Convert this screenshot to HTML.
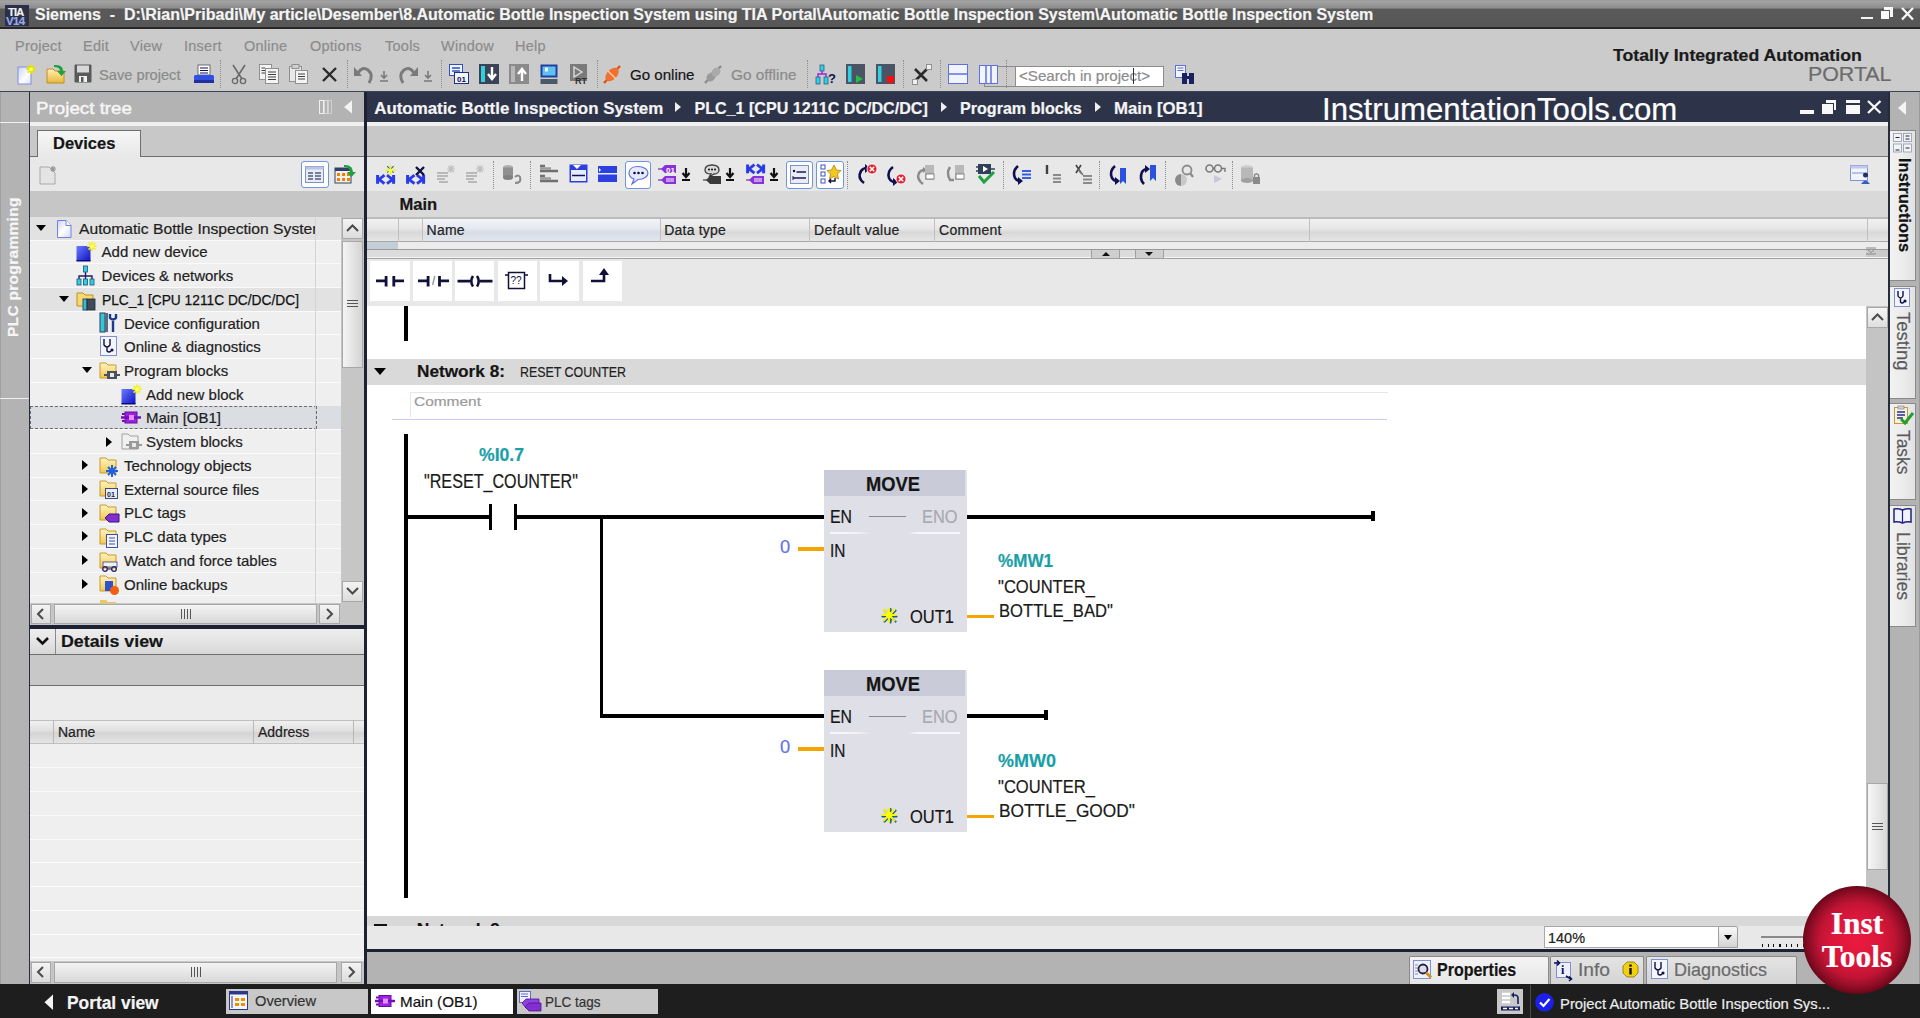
<!DOCTYPE html>
<html><head><meta charset="utf-8">
<style>
*{margin:0;padding:0;box-sizing:border-box}
html,body{width:1920px;height:1018px;overflow:hidden;background:#cbcbcb;font-family:"Liberation Sans",sans-serif;position:relative}
.a{position:absolute}
.t{position:absolute;white-space:pre;line-height:1;-webkit-text-stroke:0.2px currentColor}
svg{position:absolute;overflow:visible}
</style></head><body>
<div class="a" style="left:0px;top:0px;width:1920px;height:27px;background:linear-gradient(#9a9a9a 0,#a2a2a2 1.5px,#8c8c8c 8px,#5a5a5a 9.2px,#575757 26px,#5e5e5e 27px);"></div>
<div class="a" style="left:0px;top:27px;width:1920px;height:2px;background:#262626;"></div>
<div class="a" style="left:0px;top:29px;width:1920px;height:62px;background:#cbcbcb;"></div>
<div class="a" style="left:0px;top:91px;width:1920px;height:1px;background:#3c4258;"></div>
<div class="a" style="left:0px;top:92px;width:29px;height:892px;background:#b3b3b3;"></div>
<div class="a" style="left:0px;top:92px;width:1px;height:892px;background:#a0a0a0;"></div>
<div class="a" style="left:29px;top:92px;width:1px;height:892px;background:#262b3d;"></div>
<div class="a" style="left:30px;top:92px;width:334px;height:30px;background:#b3b3b3;"></div>
<div class="a" style="left:30px;top:122px;width:334px;height:4px;background:#f0f0f0;"></div>
<div class="a" style="left:30px;top:126px;width:334px;height:30px;background:#c8c8c8;"></div>
<div class="a" style="left:30px;top:156px;width:334px;height:1px;background:#7a7a7a;"></div>
<div class="a" style="left:30px;top:157px;width:334px;height:34px;background:#e8e8e8;"></div>
<div class="a" style="left:30px;top:191px;width:334px;height:26px;background:#c6c6c6;"></div>
<div class="a" style="left:30px;top:217px;width:311px;height:386px;background:#efefef;"></div>
<div class="a" style="left:341px;top:217px;width:23px;height:386px;background:#c6c6c6;"></div>
<div class="a" style="left:364px;top:92px;width:3px;height:892px;background:#1c2133;"></div>
<div class="a" style="left:367px;top:92px;width:1521px;height:30px;background:#2d3349;"></div>
<div class="a" style="left:367px;top:122px;width:1521px;height:4px;background:#f0f0f0;"></div>
<div class="a" style="left:367px;top:126px;width:1521px;height:30px;background:#c8c8c8;"></div>
<div class="a" style="left:367px;top:156px;width:1521px;height:1px;background:#7a7a7a;"></div>
<div class="a" style="left:367px;top:157px;width:1521px;height:34px;background:#e8e8e8;"></div>
<div class="a" style="left:367px;top:191px;width:1521px;height:27px;background:#d9d9d9;"></div>
<div class="a" style="left:367px;top:258px;width:1521px;height:48px;background:#e8e8e8;"></div>
<div class="a" style="left:367px;top:306px;width:1499px;height:610px;background:#ffffff;"></div>
<div class="a" style="left:1866px;top:306px;width:22px;height:610px;background:#c4c4c4;"></div>
<div class="a" style="left:367px;top:916px;width:1499px;height:10px;background:#d8d8d8;"></div>
<div class="a" style="left:367px;top:926px;width:1521px;height:23px;background:#e8e8e8;"></div>
<div class="a" style="left:1888px;top:92px;width:2px;height:892px;background:#262b3d;"></div>
<div class="a" style="left:1890px;top:92px;width:30px;height:892px;background:#b3b3b3;"></div>
<div class="a" style="left:1919px;top:92px;width:1px;height:892px;background:#9a9a9a;"></div>
<div class="a" style="left:367px;top:949px;width:1523px;height:3px;background:#1c2133;"></div>
<div class="a" style="left:367px;top:952px;width:1523px;height:32px;background:#b3b3b3;"></div>
<div class="a" style="left:0px;top:984px;width:1920px;height:34px;background:#1e1e1e;"></div>
<div class="t" style="left:35.5px;top:100.00px;font-size:17px;color:#f6f6f6;transform:scaleX(1.104356672694134);transform-origin:0 0;-webkit-text-stroke:0.45px #f6f6f6;">Project tree</div>
<svg style="left:318px;top:99px" width="40" height="16"><rect x="1.5" y="1.5" width="4" height="13" fill="none" stroke="#f0f0f0"/><rect x="6.5" y="1.5" width="3" height="13" fill="none" stroke="#d8d8d8"/><rect x="10.5" y="1.5" width="3" height="13" fill="none" stroke="#d0d0d0"/><path d="M26 8 L34 1.5 L34 14.5 Z" fill="#f4f4f4"/></svg>
<div class="a" style="left:37px;top:130px;width:104px;height:27px;background:linear-gradient(#f6f6f6,#e8e8e8);border:1px solid #6e6e6e;border-bottom:none"></div>
<div class="a" style="left:30px;top:156px;width:8px;height:1px;background:#6e6e6e;"></div>
<div class="a" style="left:141px;top:156px;width:223px;height:1px;background:#6e6e6e;"></div>
<div class="t" style="left:53px;top:135.00px;font-size:16.5px;color:#151515;font-weight:bold;">Devices</div>
<svg style="left:39px;top:165px" width="22" height="22"><path d="M1 2 H10 L16 8 V19 H1 Z" fill="#e4e4e4" stroke="#a8a8a8"/><path d="M14 1 V7 M11 4 H17 M12 2 L16 6 M16 2 L12 6" stroke="#9a9a9a" stroke-width="1.2"/></svg>
<div class="a" style="left:301px;top:161px;width:28px;height:27px;background:#ffffff;border:1.5px solid #6f94e0;border-radius:3px"></div>
<svg style="left:305px;top:166px" width="20" height="18"><rect x="0.5" y="0.5" width="18" height="16" fill="#e8ecf6" stroke="#8090c0"/><rect x="0.5" y="0.5" width="18" height="3" fill="#b8c4e8"/><path d="M3 7 H8 M10 7 H16 M3 10 H8 M10 10 H16 M3 13 H8 M10 13 H16" stroke="#505a80" stroke-width="1.3"/></svg>
<svg style="left:334px;top:163px" width="24" height="22"><rect x="1" y="5" width="16" height="15" fill="#f0f0f0" stroke="#30406a"/><rect x="1" y="5" width="16" height="3" fill="#30406a"/><g fill="#f08000"><rect x="3" y="10" width="3" height="3"/><rect x="8" y="10" width="3" height="3"/><rect x="13" y="10" width="3" height="3"/><rect x="3" y="15" width="3" height="3"/><rect x="8" y="15" width="3" height="3"/><rect x="13" y="15" width="3" height="3"/></g><path d="M10 2 Q18 1 19 9 L22 9 L17.5 14 L13 9 L16 9 Q15.5 4 10 4 Z" fill="#20a040"/></svg>
<div class="a" style="left:30px;top:216.5px;width:311px;height:23px;background:#e2e2e2;"></div>
<div class="a" style="left:30px;top:239.5px;width:311px;height:1px;background:#fafafa;"></div>
<div class="a" style="left:36px;top:225.0px;width:0;height:0;border-left:5px solid transparent;border-right:5px solid transparent;border-top:6px solid #000"></div>
<svg style="left:56px;top:218.5px" width="18" height="20"><defs><linearGradient id="gd" x1="0" y1="0" x2="1" y2="1"><stop offset="0" stop-color="#c8d0f8"/><stop offset="0.5" stop-color="#ffffff"/><stop offset="1" stop-color="#d0d8ff"/></linearGradient></defs><path d="M1.5 1.5 H10 L15 6.5 V18.5 H1.5 Z" fill="url(#gd)" stroke="#7080e0"/><path d="M10 1.5 V6.5 H15" fill="#fff" stroke="#7080e0"/></svg>
<div class="a" style="left:79px;top:216.5px;width:237px;height:23px;overflow:hidden"><div class="t" style="left:0;top:4.45px;font-size:15px;color:#1e1e1e;transform:scaleX(1.0440);transform-origin:0 0">Automatic Bottle Inspection Systen</div></div>
<div class="a" style="left:30px;top:263.22px;width:311px;height:1px;background:#fafafa;"></div>
<svg style="left:76px;top:241.22px" width="22" height="22"><defs><linearGradient id="ga" x1="0" y1="0" x2="1" y2="1"><stop offset="0" stop-color="#6a7cff"/><stop offset="1" stop-color="#1010c0"/></linearGradient></defs><rect x="0.5" y="5" width="14" height="15" fill="url(#ga)"/><rect x="0.5" y="19" width="14" height="1.5" fill="#0a0a80"/><g stroke="#f0f020" stroke-width="1.6"><path d="M16 0.5 V10 M11.2 5.2 H20.8 M12.6 1.8 L19.4 8.6 M19.4 1.8 L12.6 8.6"/></g><circle cx="16" cy="5.2" r="2" fill="#ffff60"/></svg>
<div class="t" style="left:101.6px;top:244.00px;font-size:15px;color:#1e1e1e;">Add new device</div>
<div class="a" style="left:30px;top:286.94px;width:311px;height:1px;background:#fafafa;"></div>
<svg style="left:76px;top:264.94px" width="20" height="22"><path d="M9.5 6 V11 M3 14 V11 H16 V14 M9.5 11 V14" stroke="#202060" stroke-width="1.4" fill="none"/><rect x="7.5" y="1" width="4" height="6" fill="#30d0e0" stroke="#205080" stroke-width="0.8"/><rect x="1" y="14" width="4" height="6" fill="#30d0e0" stroke="#205080" stroke-width="0.8"/><rect x="7.5" y="14" width="4" height="6" fill="#30d0e0" stroke="#205080" stroke-width="0.8"/><rect x="14" y="14" width="4" height="6" fill="#30d0e0" stroke="#205080" stroke-width="0.8"/></svg>
<div class="t" style="left:101.6px;top:268.00px;font-size:15px;color:#1e1e1e;">Devices &amp; networks</div>
<div class="a" style="left:30px;top:287.65999999999997px;width:311px;height:23px;background:#e2e2e2;"></div>
<div class="a" style="left:30px;top:310.65999999999997px;width:311px;height:1px;background:#fafafa;"></div>
<div class="a" style="left:59px;top:296.2px;width:0;height:0;border-left:5px solid transparent;border-right:5px solid transparent;border-top:6px solid #000"></div>
<svg style="left:76px;top:288.65999999999997px" width="22" height="22"><path d="M1 4 H7 L9 6 H17 V17 H1 Z" fill="#f8d870" stroke="#c09020"/><rect x="7" y="10" width="4" height="11" fill="#30c0d0" stroke="#203050" stroke-width="0.8"/><rect x="11" y="10" width="8" height="11" fill="#404a5a" stroke="#202830" stroke-width="0.8"/></svg>
<div class="t" style="left:101.6px;top:292.00px;font-size:15px;color:#111;transform:scaleX(0.917157234488691);transform-origin:0 0;-webkit-text-stroke:0.25px #111;">PLC_1 [CPU 1211C DC/DC/DC]</div>
<div class="a" style="left:30px;top:334.38px;width:311px;height:1px;background:#fafafa;"></div>
<svg style="left:99px;top:312.38px" width="22" height="22"><rect x="1" y="1" width="5" height="19" fill="#30c8d8" stroke="#304060"/><rect x="6" y="1" width="3" height="19" fill="#606a7a"/><path d="M14 20 V9 M11 2 V6 Q14 9 17 6 V2" stroke="#1a3a90" stroke-width="2.4" fill="none"/></svg>
<div class="t" style="left:124px;top:316.00px;font-size:15px;color:#1e1e1e;">Device configuration</div>
<div class="a" style="left:30px;top:358.1px;width:311px;height:1px;background:#fafafa;"></div>
<svg style="left:100px;top:336.1px" width="18" height="22"><rect x="0.5" y="0.5" width="16" height="19" fill="#f4f6ff" stroke="#8090d0"/><path d="M4 3 V9 Q7 13 10 9 V3 M7 11 V15 Q9 17 11 15" stroke="#101040" stroke-width="1.4" fill="none"/><circle cx="12" cy="14" r="1.6" fill="#101040"/></svg>
<div class="t" style="left:124px;top:339.00px;font-size:15px;color:#1e1e1e;">Online &amp; diagnostics</div>
<div class="a" style="left:30px;top:381.82px;width:311px;height:1px;background:#fafafa;"></div>
<div class="a" style="left:82px;top:367.3px;width:0;height:0;border-left:5px solid transparent;border-right:5px solid transparent;border-top:6px solid #000"></div>
<svg style="left:99px;top:359.82px" width="22" height="22"><defs><linearGradient id="gf" x1="0" y1="0" x2="0" y2="1"><stop offset="0" stop-color="#fff4c0"/><stop offset="1" stop-color="#f0c850"/></linearGradient></defs><path d="M1 3 H7 L9 5 H17 V18 H1 Z" fill="url(#gf)" stroke="#c89828"/></svg>
<svg style="left:104px;top:369.82px" width="16" height="10"><rect x="3" y="1" width="10" height="8" fill="#4a5060"/><path d="M0 5 H16" stroke="#4a5060" stroke-width="2"/><rect x="6" y="3" width="4" height="4" fill="#e8e8e8"/></svg>
<div class="t" style="left:124px;top:363.00px;font-size:15px;color:#1e1e1e;">Program blocks</div>
<div class="a" style="left:30px;top:405.53999999999996px;width:311px;height:1px;background:#fafafa;"></div>
<svg style="left:121px;top:383.53999999999996px" width="22" height="22"><defs><linearGradient id="ga" x1="0" y1="0" x2="1" y2="1"><stop offset="0" stop-color="#6a7cff"/><stop offset="1" stop-color="#1010c0"/></linearGradient></defs><rect x="0.5" y="5" width="14" height="15" fill="url(#ga)"/><rect x="0.5" y="19" width="14" height="1.5" fill="#0a0a80"/><g stroke="#f0f020" stroke-width="1.6"><path d="M16 0.5 V10 M11.2 5.2 H20.8 M12.6 1.8 L19.4 8.6 M19.4 1.8 L12.6 8.6"/></g><circle cx="16" cy="5.2" r="2" fill="#ffff60"/></svg>
<div class="t" style="left:146px;top:387.00px;font-size:15px;color:#1e1e1e;">Add new block</div>
<div class="a" style="left:30px;top:406.26px;width:311px;height:23px;background:#dadde2;"></div>
<div class="a" style="left:30px;top:406.3px;width:287px;height:23px;border:1px dashed #6a6a6a"></div>
<div class="a" style="left:30px;top:429.26px;width:311px;height:1px;background:#fafafa;"></div>
<svg style="left:121px;top:410.26px" width="22" height="16"><rect x="4" y="2" width="12" height="11" fill="#a020e0" stroke="#6010a0"/><path d="M0 7.5 H20" stroke="#7010b0" stroke-width="2.5"/><path d="M1 4 H4 M1 11 H4" stroke="#7010b0" stroke-width="2"/><rect x="8" y="5" width="5" height="5" fill="#e090ff"/></svg>
<div class="t" style="left:146px;top:410.00px;font-size:15px;color:#1e1e1e;">Main [OB1]</div>
<div class="a" style="left:30px;top:452.98px;width:311px;height:1px;background:#fafafa;"></div>
<div class="a" style="left:106px;top:436.5px;width:0;height:0;border-top:5px solid transparent;border-bottom:5px solid transparent;border-left:6px solid #000"></div>
<svg style="left:121px;top:430.98px" width="22" height="22"><path d="M1 3 H7 L9 5 H17 V18 H1 Z" fill="#f0f0f0" stroke="#a0a0a0"/><rect x="8" y="10" width="10" height="8" fill="#9a9a9a"/><path d="M5 14 H21" stroke="#9a9a9a" stroke-width="2"/><rect x="11" y="12" width="4" height="4" fill="#e8e8e8"/></svg>
<div class="t" style="left:146px;top:434.00px;font-size:15px;color:#1e1e1e;">System blocks</div>
<div class="a" style="left:30px;top:476.7px;width:311px;height:1px;background:#fafafa;"></div>
<div class="a" style="left:82px;top:460.2px;width:0;height:0;border-top:5px solid transparent;border-bottom:5px solid transparent;border-left:6px solid #000"></div>
<svg style="left:99px;top:454.7px" width="22" height="22"><defs><linearGradient id="gf" x1="0" y1="0" x2="0" y2="1"><stop offset="0" stop-color="#fff4c0"/><stop offset="1" stop-color="#f0c850"/></linearGradient></defs><path d="M1 3 H7 L9 5 H17 V18 H1 Z" fill="url(#gf)" stroke="#c89828"/></svg>
<svg style="left:106px;top:464.7px" width="12" height="12"><path d="M6 0 V12 M0 6 H12 M2 2 L10 10 M10 2 L2 10" stroke="#2060e0" stroke-width="2"/></svg>
<div class="t" style="left:124px;top:458.00px;font-size:15px;color:#1e1e1e;">Technology objects</div>
<div class="a" style="left:30px;top:500.41999999999996px;width:311px;height:1px;background:#fafafa;"></div>
<div class="a" style="left:82px;top:483.9px;width:0;height:0;border-top:5px solid transparent;border-bottom:5px solid transparent;border-left:6px solid #000"></div>
<svg style="left:99px;top:478.41999999999996px" width="22" height="22"><defs><linearGradient id="gf" x1="0" y1="0" x2="0" y2="1"><stop offset="0" stop-color="#fff4c0"/><stop offset="1" stop-color="#f0c850"/></linearGradient></defs><path d="M1 3 H7 L9 5 H17 V18 H1 Z" fill="url(#gf)" stroke="#c89828"/></svg>
<svg style="left:105px;top:488.41999999999996px" width="13" height="11"><rect x="0.5" y="0.5" width="12" height="10" fill="#e8ecf8" stroke="#404a80"/><text x="2" y="9" font-size="7" font-family="Liberation Sans" font-weight="bold" fill="#202040">01</text></svg>
<div class="t" style="left:124px;top:482.00px;font-size:15px;color:#1e1e1e;">External source files</div>
<div class="a" style="left:30px;top:524.14px;width:311px;height:1px;background:#fafafa;"></div>
<div class="a" style="left:82px;top:507.6px;width:0;height:0;border-top:5px solid transparent;border-bottom:5px solid transparent;border-left:6px solid #000"></div>
<svg style="left:99px;top:502.14px" width="22" height="22"><defs><linearGradient id="gf" x1="0" y1="0" x2="0" y2="1"><stop offset="0" stop-color="#fff4c0"/><stop offset="1" stop-color="#f0c850"/></linearGradient></defs><path d="M1 3 H7 L9 5 H17 V18 H1 Z" fill="url(#gf)" stroke="#c89828"/></svg>
<svg style="left:105px;top:513.14px" width="15" height="10"><path d="M0 5 L4 1 H14 V9 H4 Z" fill="#8030d0" stroke="#401080"/></svg>
<div class="t" style="left:124px;top:505.00px;font-size:15px;color:#1e1e1e;">PLC tags</div>
<div class="a" style="left:30px;top:547.86px;width:311px;height:1px;background:#fafafa;"></div>
<div class="a" style="left:82px;top:531.4px;width:0;height:0;border-top:5px solid transparent;border-bottom:5px solid transparent;border-left:6px solid #000"></div>
<svg style="left:99px;top:525.86px" width="22" height="22"><defs><linearGradient id="gf" x1="0" y1="0" x2="0" y2="1"><stop offset="0" stop-color="#fff4c0"/><stop offset="1" stop-color="#f0c850"/></linearGradient></defs><path d="M1 3 H7 L9 5 H17 V18 H1 Z" fill="url(#gf)" stroke="#c89828"/></svg>
<svg style="left:106px;top:533.86px" width="12" height="14"><rect x="0.5" y="0.5" width="11" height="13" fill="#f0f4ff" stroke="#4050a0"/><path d="M3 4 H9 M3 7 H9 M3 10 H9" stroke="#4050a0"/></svg>
<div class="t" style="left:124px;top:529.00px;font-size:15px;color:#1e1e1e;">PLC data types</div>
<div class="a" style="left:30px;top:571.5799999999999px;width:311px;height:1px;background:#fafafa;"></div>
<div class="a" style="left:82px;top:555.1px;width:0;height:0;border-top:5px solid transparent;border-bottom:5px solid transparent;border-left:6px solid #000"></div>
<svg style="left:99px;top:549.5799999999999px" width="22" height="22"><defs><linearGradient id="gf" x1="0" y1="0" x2="0" y2="1"><stop offset="0" stop-color="#fff4c0"/><stop offset="1" stop-color="#f0c850"/></linearGradient></defs><path d="M1 3 H7 L9 5 H17 V18 H1 Z" fill="url(#gf)" stroke="#c89828"/></svg>
<svg style="left:100px;top:561.5799999999999px" width="20" height="10"><rect x="3" y="0" width="14" height="5" fill="#f0f0f8" stroke="#404080" stroke-width="0.8"/><circle cx="5" cy="7" r="2.3" fill="none" stroke="#202060" stroke-width="1.3"/><circle cx="14" cy="7" r="2.3" fill="none" stroke="#202060" stroke-width="1.3"/><path d="M7.3 7 H11.7" stroke="#202060"/></svg>
<div class="t" style="left:124px;top:553.00px;font-size:15px;color:#1e1e1e;">Watch and force tables</div>
<div class="a" style="left:30px;top:595.3px;width:311px;height:1px;background:#fafafa;"></div>
<div class="a" style="left:82px;top:578.8px;width:0;height:0;border-top:5px solid transparent;border-bottom:5px solid transparent;border-left:6px solid #000"></div>
<svg style="left:99px;top:573.3px" width="22" height="22"><defs><linearGradient id="gf" x1="0" y1="0" x2="0" y2="1"><stop offset="0" stop-color="#fff4c0"/><stop offset="1" stop-color="#f0c850"/></linearGradient></defs><path d="M1 3 H7 L9 5 H17 V18 H1 Z" fill="url(#gf)" stroke="#c89828"/></svg>
<svg style="left:105px;top:581.3px" width="15" height="15"><rect x="0" y="0" width="8" height="10" fill="#3050d0"/><circle cx="9.5" cy="9.5" r="4.5" fill="#f06010"/></svg>
<div class="t" style="left:124px;top:577.00px;font-size:15px;color:#1e1e1e;">Online backups</div>
<svg style="left:99px;top:600px" width="22" height="3"><path d="M1 0 H7 L9 2 H17 V3 H1 Z" fill="#f0c850"/></svg>
<div class="a" style="left:315px;top:217px;width:1px;height:386px;background:#d4d4d4;"></div>
<div class="a" style="left:342px;top:218px;width:21px;height:21px;background:linear-gradient(#f4f4f4,#dcdcdc);border:1px solid #a8a8a8"></div>
<svg style="left:345px;top:222px" width="16" height="12"><path d="M2 9 L7.5 3.5 L13 9" stroke="#4a4a4a" stroke-width="2" fill="none"/></svg>
<div class="a" style="left:342px;top:241px;width:21px;height:127px;background:linear-gradient(90deg,#f4f4f4,#d4d4d4);border:1px solid #a8a8a8"></div>
<div class="a" style="left:347px;top:300px;width:11px;height:1.2px;background:#555;"></div>
<div class="a" style="left:347px;top:303px;width:11px;height:1.2px;background:#555;"></div>
<div class="a" style="left:347px;top:306px;width:11px;height:1.2px;background:#555;"></div>
<div class="a" style="left:342px;top:581px;width:21px;height:21px;background:linear-gradient(#f4f4f4,#dcdcdc);border:1px solid #a8a8a8"></div>
<svg style="left:345px;top:585px" width="16" height="12"><path d="M2 3 L7.5 8.5 L13 3" stroke="#4a4a4a" stroke-width="2" fill="none"/></svg>
<div class="a" style="left:30px;top:603px;width:311px;height:22px;background:#c6c6c6;"></div>
<div class="a" style="left:31px;top:604px;width:20px;height:20px;background:linear-gradient(#f4f4f4,#dcdcdc);border:1px solid #a8a8a8"></div>
<svg style="left:34px;top:607px" width="14" height="14"><path d="M9 2 L4 7 L9 12" stroke="#4a4a4a" stroke-width="2" fill="none"/></svg>
<div class="a" style="left:54px;top:604px;width:263px;height:20px;background:linear-gradient(#f4f4f4,#d8d8d8);border:1px solid #a8a8a8"></div>
<div class="a" style="left:181px;top:609px;width:1px;height:10px;background:#555;"></div>
<div class="a" style="left:184px;top:609px;width:1px;height:10px;background:#555;"></div>
<div class="a" style="left:187px;top:609px;width:1px;height:10px;background:#555;"></div>
<div class="a" style="left:190px;top:609px;width:1px;height:10px;background:#555;"></div>
<div class="a" style="left:319px;top:604px;width:21px;height:20px;background:linear-gradient(#f4f4f4,#dcdcdc);border:1px solid #a8a8a8"></div>
<svg style="left:322px;top:607px" width="14" height="14"><path d="M5 2 L10 7 L5 12" stroke="#4a4a4a" stroke-width="2" fill="none"/></svg>
<div class="a" style="left:341px;top:603px;width:23px;height:22px;background:#c6c6c6;"></div>
<div class="a" style="left:30px;top:625px;width:334px;height:3.5px;background:#1c2133;"></div>
<div class="a" style="left:30px;top:628.5px;width:334px;height:26px;background:linear-gradient(#ededed,#e4e4e4 50%,#d6d6d6);"></div>
<div class="a" style="left:30px;top:654px;width:334px;height:1px;background:#6e6e6e;"></div>
<div class="a" style="left:55px;top:629px;width:1px;height:25px;background:#8a8a8a;"></div>
<svg style="left:35px;top:635px" width="16" height="12"><path d="M2 3 L7.5 8.5 L13 3" stroke="#111" stroke-width="2.6" fill="none"/></svg>
<div class="t" style="left:61px;top:634.00px;font-size:16.8px;color:#151515;font-weight:bold;transform:scaleX(1.0604825975585508);transform-origin:0 0;">Details view</div>
<div class="a" style="left:30px;top:655px;width:334px;height:30px;background:#c8c8c8;"></div>
<div class="a" style="left:30px;top:685px;width:334px;height:1px;background:#6e6e6e;"></div>
<div class="a" style="left:30px;top:686px;width:334px;height:34px;background:#ececec;"></div>
<div class="a" style="left:30px;top:720px;width:334px;height:24px;background:linear-gradient(#f0f0f0,#e0e0e0 45%,#d4d4d4 55%,#e4e4e4);border-top:1px solid #c0c0c0;border-bottom:1px solid #c0c0c0"></div>
<div class="a" style="left:53px;top:721px;width:1px;height:22px;background:#b8b8b8;"></div>
<div class="a" style="left:253px;top:721px;width:1px;height:22px;background:#b8b8b8;"></div>
<div class="a" style="left:353px;top:721px;width:1px;height:22px;background:#b8b8b8;"></div>
<div class="t" style="left:58px;top:725.00px;font-size:14px;color:#222;">Name</div>
<div class="t" style="left:258px;top:725.00px;font-size:14px;color:#222;">Address</div>
<div class="a" style="left:30px;top:744px;width:334px;height:217px;background:#efefef;"></div>
<div class="a" style="left:30px;top:767.3px;width:334px;height:1.2px;background:#fafafa;"></div>
<div class="a" style="left:30px;top:791.05px;width:334px;height:1.2px;background:#fafafa;"></div>
<div class="a" style="left:30px;top:814.8px;width:334px;height:1.2px;background:#fafafa;"></div>
<div class="a" style="left:30px;top:838.55px;width:334px;height:1.2px;background:#fafafa;"></div>
<div class="a" style="left:30px;top:862.3px;width:334px;height:1.2px;background:#fafafa;"></div>
<div class="a" style="left:30px;top:886.05px;width:334px;height:1.2px;background:#fafafa;"></div>
<div class="a" style="left:30px;top:909.8px;width:334px;height:1.2px;background:#fafafa;"></div>
<div class="a" style="left:30px;top:933.55px;width:334px;height:1.2px;background:#fafafa;"></div>
<div class="a" style="left:30px;top:957.3px;width:334px;height:1.2px;background:#fafafa;"></div>
<div class="a" style="left:30px;top:961px;width:334px;height:23px;background:#c6c6c6;"></div>
<div class="a" style="left:31px;top:962px;width:20px;height:21px;background:linear-gradient(#f4f4f4,#dcdcdc);border:1px solid #a8a8a8"></div>
<svg style="left:34px;top:965px" width="14" height="14"><path d="M9 2 L4 7 L9 12" stroke="#4a4a4a" stroke-width="2" fill="none"/></svg>
<div class="a" style="left:54px;top:962px;width:283px;height:21px;background:linear-gradient(#f4f4f4,#d8d8d8);border:1px solid #a8a8a8"></div>
<div class="a" style="left:191px;top:967px;width:1px;height:10px;background:#555;"></div>
<div class="a" style="left:194px;top:967px;width:1px;height:10px;background:#555;"></div>
<div class="a" style="left:197px;top:967px;width:1px;height:10px;background:#555;"></div>
<div class="a" style="left:200px;top:967px;width:1px;height:10px;background:#555;"></div>
<div class="a" style="left:341px;top:962px;width:21px;height:21px;background:linear-gradient(#f4f4f4,#dcdcdc);border:1px solid #a8a8a8"></div>
<svg style="left:344px;top:965px" width="14" height="14"><path d="M5 2 L10 7 L5 12" stroke="#4a4a4a" stroke-width="2" fill="none"/></svg>
<div class="t" style="left:5px;top:337px;font-size:15.5px;font-weight:bold;color:#f6f6f6;transform:rotate(-90deg);transform-origin:0 0;letter-spacing:0.3px">PLC programming</div>
<div class="a" style="left:0px;top:122px;width:29px;height:1px;background:#f0f0f0;"></div>
<div class="a" style="left:0px;top:398px;width:29px;height:1px;background:#f0f0f0;"></div>
<div class="a" style="left:5px;top:5px;width:24px;height:21px;background:#2b2f48;"></div>
<div class="t" style="left:8px;top:7.00px;font-size:11px;color:#f0f0f0;font-weight:bold;letter-spacing:-0.8px;">TIA</div>
<div class="t" style="left:6px;top:16.00px;font-size:11.5px;color:#98a8e8;font-weight:bold;letter-spacing:-0.6px;">V14</div>
<div class="t" style="left:35px;top:7.00px;font-size:16px;color:#f4f4f4;font-weight:bold;">Siemens  -  D:\Rian\Pribadi\My article\Desember\8.Automatic Bottle Inspection System using TIA Portal\Automatic Bottle Inspection System\Automatic Bottle Inspection System</div>
<div class="a" style="left:1861px;top:17.1px;width:11.8px;height:2px;background:#f4f4f4;"></div>
<div class="a" style="left:1883.8px;top:7.3px;width:8.8px;height:2.5px;background:#f8f8f8;"></div>
<div class="a" style="left:1890.1px;top:7.3px;width:2.5px;height:9.3px;background:#f8f8f8;"></div>
<div class="a" style="left:1881.1px;top:11px;width:7.8px;height:8px;background:#f8f8f8;"></div>
<svg style="left:1900px;top:6px" width="15" height="15"><path d="M2 2 L13 13.5 M13 2 L2 13.5" stroke="#f8f8f8" stroke-width="2.3"/></svg>
<div class="t" style="left:15px;top:39.00px;font-size:14.5px;color:#8c8c8c;letter-spacing:0.25px;">Project</div>
<div class="t" style="left:83px;top:39.00px;font-size:14.5px;color:#8c8c8c;letter-spacing:0.25px;">Edit</div>
<div class="t" style="left:130px;top:39.00px;font-size:14.5px;color:#8c8c8c;letter-spacing:0.25px;">View</div>
<div class="t" style="left:184px;top:39.00px;font-size:14.5px;color:#8c8c8c;letter-spacing:0.25px;">Insert</div>
<div class="t" style="left:244px;top:39.00px;font-size:14.5px;color:#8c8c8c;letter-spacing:0.25px;">Online</div>
<div class="t" style="left:310px;top:39.00px;font-size:14.5px;color:#8c8c8c;letter-spacing:0.25px;">Options</div>
<div class="t" style="left:385px;top:39.00px;font-size:14.5px;color:#8c8c8c;letter-spacing:0.25px;">Tools</div>
<div class="t" style="left:441px;top:39.00px;font-size:14.5px;color:#8c8c8c;letter-spacing:0.25px;">Window</div>
<div class="t" style="left:515px;top:39.00px;font-size:14.5px;color:#8c8c8c;letter-spacing:0.25px;">Help</div>
<div class="a" style="left:220px;top:60px;width:0;height:28px;border-left:1px dotted #909090"></div>
<div class="a" style="left:346.5px;top:60px;width:0;height:28px;border-left:1px dotted #909090"></div>
<div class="a" style="left:440.5px;top:60px;width:0;height:28px;border-left:1px dotted #909090"></div>
<div class="a" style="left:596.5px;top:60px;width:0;height:28px;border-left:1px dotted #909090"></div>
<div class="a" style="left:806.5px;top:60px;width:0;height:28px;border-left:1px dotted #909090"></div>
<div class="a" style="left:902.5px;top:60px;width:0;height:28px;border-left:1px dotted #909090"></div>
<div class="a" style="left:939.5px;top:60px;width:0;height:28px;border-left:1px dotted #909090"></div>
<svg style="left:17px;top:64px" width="22" height="22"><defs><linearGradient id="tn" x1="0" y1="0" x2="1" y2="1"><stop offset="0" stop-color="#c8d0f8"/><stop offset="0.6" stop-color="#fff"/><stop offset="1" stop-color="#d8e0ff"/></linearGradient></defs><rect x="1" y="3" width="13" height="17" fill="url(#tn)" stroke="#8090e0"/><g stroke="#e0e010" stroke-width="1.8"><path d="M14 0.5 V10 M9.2 5.2 H18.8 M10.6 1.8 L17.4 8.6 M17.4 1.8 L10.6 8.6"/></g><circle cx="14" cy="5.2" r="2" fill="#ffff40"/></svg>
<svg style="left:46px;top:64px" width="22" height="22"><defs><linearGradient id="tf" x1="0" y1="0" x2="0" y2="1"><stop offset="0" stop-color="#fff0b0"/><stop offset="1" stop-color="#e8b840"/></linearGradient></defs><path d="M1 5 H7 L9 7 H18 V19 H1 Z" fill="url(#tf)" stroke="#c09020"/><path d="M8 1 Q17 0 17 7 L20 7 L15.5 12 L11 7 L14 7 Q14 3 8 3 Z" fill="#20a040"/></svg>
<svg style="left:74px;top:64px" width="20" height="20"><rect x="0.5" y="0.5" width="17" height="18" fill="#5a5a5a" rx="1"/><rect x="3" y="1.5" width="12" height="7" fill="#d8d8d8"/><rect x="5" y="12" width="8" height="6" fill="#f0f0f0"/><rect x="7" y="13" width="2.5" height="5" fill="#5a5a5a"/></svg>
<div class="t" style="left:99px;top:68.00px;font-size:14.5px;color:#8a8a8a;transform:scaleX(1.0111427308607894);transform-origin:0 0;">Save project</div>
<svg style="left:193px;top:64px" width="22" height="22"><rect x="5" y="1" width="12" height="10" fill="#fff" stroke="#505050" stroke-width="0.8"/><path d="M7 4 H15 M7 6.5 H15 M7 9 H15" stroke="#101060" stroke-width="1.2"/><rect x="1" y="11" width="20" height="8" rx="1.5" fill="#3050e0"/><rect x="1" y="16" width="20" height="3" fill="#2030a0"/></svg>
<svg style="left:231px;top:64px" width="16" height="21"><path d="M2 1 L11 15 M14 1 L5 15" stroke="#6a6a6a" stroke-width="1.6"/><circle cx="4" cy="17" r="2.6" fill="none" stroke="#6a6a6a" stroke-width="1.4"/><circle cx="12" cy="17" r="2.6" fill="none" stroke="#6a6a6a" stroke-width="1.4"/></svg>
<svg style="left:259px;top:64px" width="21" height="21"><rect x="0.5" y="0.5" width="12" height="15" fill="#f4f4f4" stroke="#909090"/><rect x="6.5" y="4.5" width="13" height="15" fill="#f4f4f4" stroke="#909090"/><path d="M9 8 H17 M9 10.5 H17 M9 13 H17 M9 15.5 H17" stroke="#404040" stroke-width="1.2"/><path d="M2.5 4 H6 M2.5 6.5 H6 M2.5 9 H6" stroke="#404040"/></svg>
<svg style="left:289px;top:64px" width="21" height="21"><rect x="0.5" y="2.5" width="12" height="15" fill="#e8e8e8" stroke="#909090"/><rect x="3" y="0.5" width="7" height="4" fill="#d0d0d0" stroke="#909090"/><rect x="6.5" y="6.5" width="12" height="13" fill="#f4f4f4" stroke="#909090"/><path d="M9 10 H16 M9 12.5 H16 M9 15 H16" stroke="#404040" stroke-width="1.2"/></svg>
<svg style="left:321px;top:66px" width="17" height="17"><path d="M2 2 L15 15 M15 2 L2 15" stroke="#2a2a2a" stroke-width="2.4"/></svg>
<svg style="left:354px;top:64px" width="36" height="21"><path d="M4 9 Q8 2 14 6 Q20 11 15 19" stroke="#7a7a7a" stroke-width="3" fill="none"/><path d="M0 3 L0 12 L8 12 Z" fill="#7a7a7a"/><path d="M30 7 V13 M27 11 L30 14 L33 11 M26 17 H34" stroke="#7a7a7a" stroke-width="1.6" fill="none"/></svg>
<svg style="left:398px;top:64px" width="36" height="21"><path d="M16 9 Q12 2 6 6 Q0 11 5 19" stroke="#7a7a7a" stroke-width="3" fill="none"/><path d="M20 3 L20 12 L12 12 Z" fill="#7a7a7a"/><path d="M30 7 V13 M27 11 L30 14 L33 11 M26 17 H34" stroke="#7a7a7a" stroke-width="1.6" fill="none"/></svg>
<svg style="left:449px;top:64px" width="21" height="21"><rect x="0.5" y="0.5" width="13" height="11" fill="#f0f4ff" stroke="#3050c0"/><path d="M3 4 H11 M3 7 H11" stroke="#3050c0" stroke-width="1.3"/><rect x="5.5" y="8.5" width="14" height="11" fill="#f0f4ff" stroke="#203080"/><text x="8" y="17.5" font-size="8" font-family="Liberation Sans" font-weight="bold" fill="#101040">01</text></svg>
<svg style="left:479px;top:64px" width="21" height="21"><rect x="0" y="0" width="20" height="20" fill="#3a4456"/><rect x="2" y="2" width="4" height="16" fill="#30d0e0"/><path d="M13 3 V14 M9 10 L13 15 L17 10" stroke="#fff" stroke-width="2.4" fill="none"/></svg>
<svg style="left:509px;top:64px" width="21" height="21"><rect x="0" y="0" width="20" height="20" fill="#8a8a8a"/><rect x="2" y="2" width="4" height="16" fill="#b8b8b8"/><path d="M13 17 V6 M9 10 L13 5 L17 10" stroke="#fff" stroke-width="2.4" fill="none"/></svg>
<svg style="left:540px;top:64px" width="19" height="21"><rect x="0.5" y="0.5" width="17" height="13" fill="#2040a0"/><rect x="2.5" y="2.5" width="13" height="9" fill="#60c0f0"/><rect x="5" y="3.5" width="3" height="4" fill="#f0f0f0"/><rect x="0.5" y="15" width="17" height="5" fill="#4a5a6a"/></svg>
<svg style="left:570px;top:64px" width="20" height="21"><rect x="0" y="0" width="17" height="17" fill="#7a7a7a"/><path d="M4 3 L12 8 L4 13 Z" fill="none" stroke="#dcdcdc" stroke-width="1.4"/><text x="5" y="20" font-size="9" font-family="Liberation Sans" font-weight="bold" fill="#303030">RT</text></svg>
<svg style="left:602px;top:64px" width="20" height="21"><path d="M2 19 L18 2" stroke="#e05010" stroke-width="2.4"/><ellipse cx="10" cy="10.5" rx="5" ry="8" transform="rotate(45 10 10.5)" fill="#f07030"/><path d="M6 7 L14 15" stroke="#ffd0b0" stroke-width="1.5"/></svg>
<div class="t" style="left:630px;top:68.00px;font-size:14.5px;color:#151515;transform:scaleX(1.039108149183005);transform-origin:0 0;">Go online</div>
<svg style="left:703px;top:64px" width="20" height="21"><path d="M2 19 L18 2" stroke="#8a8a8a" stroke-width="2.4"/><ellipse cx="8" cy="13" rx="4" ry="5" transform="rotate(45 8 13)" fill="#9a9a9a"/><ellipse cx="13" cy="8" rx="4" ry="5" transform="rotate(45 13 8)" fill="#aaaaaa"/></svg>
<div class="t" style="left:731px;top:68.00px;font-size:14.5px;color:#8a8a8a;transform:scaleX(1.0598216480959806);transform-origin:0 0;">Go offline</div>
<svg style="left:816px;top:64px" width="21" height="21"><path d="M6 6 V10 M2 13 V10 H10 V13" stroke="#a020e0" stroke-width="1.4" fill="none"/><rect x="4" y="1" width="4" height="6" fill="#30d0e0" stroke="#205080" stroke-width="0.7"/><rect x="0" y="13" width="4" height="7" fill="#30d0e0" stroke="#205080" stroke-width="0.7"/><rect x="8" y="13" width="4" height="7" fill="#30d0e0" stroke="#205080" stroke-width="0.7"/><text x="12" y="19" font-size="13" font-family="Liberation Sans" font-weight="bold" fill="#101050">?</text></svg>
<svg style="left:846px;top:64px" width="20" height="21"><rect x="0" y="0" width="19" height="20" fill="#4a5464"/><rect x="2" y="2" width="3.5" height="16" fill="#30d0e0"/><path d="M10 11 L17 15 L10 19 Z" fill="#20c040"/></svg>
<svg style="left:876px;top:64px" width="20" height="21"><rect x="0" y="0" width="19" height="20" fill="#4a5464"/><rect x="2" y="2" width="3.5" height="16" fill="#30d0e0"/><rect x="11" y="12" width="7" height="7" fill="#f01010"/></svg>
<svg style="left:912px;top:64px" width="21" height="21"><path d="M3 5 L15 17 M15 5 L3 17" stroke="#2a2a2a" stroke-width="2.6"/><rect x="14.5" y="0.5" width="5" height="5" fill="#f0f0f0" stroke="#909090"/><rect x="0.5" y="15.5" width="5" height="5" fill="#f0f0f0" stroke="#909090"/></svg>
<svg style="left:948px;top:64px" width="21" height="21"><rect x="0.5" y="0.5" width="19" height="19" fill="#f0f4ff" stroke="#6070e0"/><path d="M1 10 H19" stroke="#6070e0" stroke-width="1.5"/></svg>
<div class="a" style="left:984px;top:65.5px;width:31px;height:21px;background:transparent;border:1px solid #8c8c8c;border-right:none"></div>
<div class="a" style="left:1005.5px;top:60px;width:0;height:28px;border-left:1px dotted #909090"></div>
<svg style="left:979px;top:65px" width="21" height="20"><rect x="0.5" y="0.5" width="18" height="18" fill="#f0f4ff" stroke="#6070e0"/><path d="M7 1 V19 M12 1 V19" stroke="#6070e0" stroke-width="1.5"/></svg>
<div class="a" style="left:1014.5px;top:65.5px;width:149px;height:21px;background:#ffffff;border:1px solid #8c8c8c"></div>
<div class="t" style="left:1018.5px;top:69.00px;font-size:14px;color:#8c8c8c;transform:scaleX(1.0789927170565532);transform-origin:0 0;">&lt;Search in project&gt;</div>
<div class="a" style="left:1133px;top:68px;width:1px;height:16px;background:#333;"></div>
<svg style="left:1175px;top:65px" width="21" height="20"><rect x="0.5" y="0.5" width="10" height="12" fill="#f0f4ff" stroke="#6070d0"/><path d="M2.5 3 H8.5 M2.5 5.5 H8.5" stroke="#6070d0"/><rect x="7" y="8" width="5" height="11" fill="#1a2060"/><rect x="14" y="8" width="5" height="11" fill="#1a2060"/><rect x="11" y="11" width="4" height="3" fill="#1a2060"/></svg>
<div class="t" style="left:1612.5px;top:47.00px;font-size:16.2px;color:#1a1a1a;font-weight:bold;transform:scaleX(1.0935083440738826);transform-origin:0 0;">Totally Integrated Automation</div>
<div class="t" style="left:1807.5px;top:64.00px;font-size:20.5px;color:#6b6b6b;transform:scaleX(1.0420439583045922);transform-origin:0 0;">PORTAL</div>
<div class="t" style="left:374.2px;top:101.00px;font-size:16.9px;color:#f4f4f4;font-weight:bold;">Automatic Bottle Inspection System</div>
<div class="a" style="left:675px;top:102px;width:0;height:0;border-top:5.0px solid transparent;border-bottom:5.0px solid transparent;border-left:6px solid #f0f0f0"></div>
<div class="t" style="left:694.4px;top:100.00px;font-size:16.1px;color:#f4f4f4;font-weight:bold;">PLC_1 [CPU 1211C DC/DC/DC]</div>
<div class="a" style="left:941px;top:102px;width:0;height:0;border-top:5.0px solid transparent;border-bottom:5.0px solid transparent;border-left:6px solid #f0f0f0"></div>
<div class="t" style="left:960px;top:100.00px;font-size:16.1px;color:#f4f4f4;font-weight:bold;">Program blocks</div>
<div class="a" style="left:1095px;top:102px;width:0;height:0;border-top:5.0px solid transparent;border-bottom:5.0px solid transparent;border-left:6px solid #f0f0f0"></div>
<div class="t" style="left:1114px;top:101.00px;font-size:16.8px;color:#f4f4f4;font-weight:bold;">Main [OB1]</div>
<div class="t" style="left:1322px;top:94.00px;font-size:31.2px;color:#ffffff;">InstrumentationTools.com</div>
<div class="a" style="left:1800px;top:110px;width:14px;height:4px;background:#f8f8f8;"></div>
<div class="a" style="left:1826.2px;top:100px;width:9.8px;height:2.5px;background:#f8f8f8;"></div>
<div class="a" style="left:1833.5px;top:100px;width:2.5px;height:10px;background:#f8f8f8;"></div>
<div class="a" style="left:1822.2px;top:103.7px;width:10.4px;height:10.1px;background:#f8f8f8;"></div>
<div class="a" style="left:1846px;top:100px;width:14px;height:3px;background:#f8f8f8;"></div>
<div class="a" style="left:1846px;top:104.5px;width:14px;height:9.3px;background:#f8f8f8;"></div>
<svg style="left:1866px;top:99px" width="17" height="16"><path d="M2 2 L14.5 14 M14.5 2 L2 14" stroke="#f8f8f8" stroke-width="2.4"/></svg>
<svg style="left:1897px;top:100px" width="12" height="16"><path d="M1 8 L9 1 V15 Z" fill="#f4f4f4"/></svg>
<div class="a" style="left:493px;top:161px;width:0;height:28px;border-left:1px dotted #8a8a8a"></div>
<div class="a" style="left:529.5px;top:161px;width:0;height:28px;border-left:1px dotted #8a8a8a"></div>
<div class="a" style="left:847px;top:161px;width:0;height:28px;border-left:1px dotted #8a8a8a"></div>
<div class="a" style="left:1003px;top:161px;width:0;height:28px;border-left:1px dotted #8a8a8a"></div>
<div class="a" style="left:1099px;top:161px;width:0;height:28px;border-left:1px dotted #8a8a8a"></div>
<div class="a" style="left:1165.4px;top:161px;width:0;height:28px;border-left:1px dotted #8a8a8a"></div>
<div class="a" style="left:1231.5px;top:161px;width:0;height:28px;border-left:1px dotted #8a8a8a"></div>
<div class="a" style="left:624.8px;top:161.3px;width:26.600000000000023px;height:27.3px;background:#ffffff;border:1.5px solid #6f94e0;border-radius:3px"></div>
<div class="a" style="left:786px;top:161.3px;width:27.299999999999955px;height:27.3px;background:#ffffff;border:1.5px solid #6f94e0;border-radius:3px"></div>
<div class="a" style="left:816.4px;top:161.3px;width:27.350000000000023px;height:27.3px;background:#ffffff;border:1.5px solid #6f94e0;border-radius:3px"></div>
<svg style="left:375px;top:164px" width="22" height="21"><rect x="1.1" y="11" width="3" height="8.8" fill="#2a3ae8"/><path d="M9.5 11.2 L4 15.4 L9.5 19.6 M12 11.2 L17.5 15.4 L12 19.6" stroke="#2a3ae8" stroke-width="2.8" fill="none"/><rect x="17.1" y="11" width="3" height="8.8" fill="#2a3ae8"/><g stroke="#2a6a8a" stroke-width="1.2"><path d="M12.2 2.2 L18.6 8.6 M18.6 2.2 L12.2 8.6"/></g><g stroke="#f0f030" stroke-width="1.6"><path d="M15.4 0.6 V11.6 M10 6.4 H20.8"/></g><circle cx="15.4" cy="6.4" r="2" fill="#ffff40"/></svg>
<svg style="left:405px;top:164px" width="22" height="21"><rect x="1.1" y="11" width="3" height="8.8" fill="#2a3ae8"/><path d="M9.5 11.2 L4 15.4 L9.5 19.6 M12 11.2 L17.5 15.4 L12 19.6" stroke="#2a3ae8" stroke-width="2.8" fill="none"/><rect x="17.1" y="11" width="3" height="8.8" fill="#2a3ae8"/><path d="M11 3 L19 11 M19 3 L11 11" stroke="#101040" stroke-width="2.4"/></svg>
<svg style="left:435.75px;top:164px" width="22" height="21"><path d="M1 9 H12 M1 12 H12 M1 15 H9 M3 18 H12" stroke="#b8b8b8" stroke-width="2"/><g stroke="#c0c0c0" stroke-width="1.2"><path d="M15 1 V9 M11 5 H19 M12 2 L18 8 M18 2 L12 8"/></g></svg>
<svg style="left:465.4px;top:164px" width="22" height="21"><path d="M1 9 H12 M1 12 H12 M1 15 H9 M3 18 H12" stroke="#b8b8b8" stroke-width="2"/><g stroke="#c0c0c0" stroke-width="1.2"><path d="M15 1 V9 M11 5 H19 M12 2 L18 8 M18 2 L12 8"/></g></svg>
<svg style="left:502px;top:164px" width="21" height="22"><ellipse cx="6" cy="3.5" rx="5" ry="2.5" fill="#b0b0b0"/><rect x="1" y="3.5" width="10" height="10" fill="#909090"/><ellipse cx="6" cy="13.5" rx="5" ry="2.5" fill="#808080"/><path d="M13 19 Q20 19 18 13 Q16 10 13 13" stroke="#8a8a8a" stroke-width="2" fill="none"/></svg>
<svg style="left:539px;top:164px" width="20" height="21"><path d="M1 2 H6 M1 7 H19 M1 12 H6 M1 17 H19" stroke="#707070" stroke-width="2.6"/><path d="M1 4.5 H12 M1 14.5 H12" stroke="#9a9a9a" stroke-width="2.4"/></svg>
<svg style="left:568.6px;top:164px" width="19" height="20"><rect x="0.5" y="0.5" width="18" height="18" fill="#2c40e0"/><rect x="2" y="6" width="15" height="11" fill="#e8ecff"/><path d="M3 11.5 H16" stroke="#101060" stroke-width="1.5"/><path d="M4 1 L8 5 L12 1 Z" fill="#fff"/></svg>
<svg style="left:598px;top:166px" width="20" height="17"><rect x="0" y="0" width="19" height="16" fill="#2c40e0"/><rect x="0" y="7" width="19" height="1.5" fill="#e8ecff"/><path d="M1 2 L3 4 L1 6 Z" fill="#fff"/></svg>
<svg style="left:628px;top:165px" width="22" height="20"><path d="M10 1.5 C4 1.5 1 4.5 1 8 C1 11 3 13 6 14 L4 19 L10 14.5 C16 14.5 20 11.5 20 8 C20 4.5 16 1.5 10 1.5 Z" fill="#e8eaff" stroke="#6070e0" stroke-width="1.2"/><circle cx="6.5" cy="8" r="1.3" fill="#101040"/><circle cx="10.5" cy="8" r="1.3" fill="#101040"/><circle cx="14.5" cy="8" r="1.3" fill="#101040"/></svg>
<svg style="left:657px;top:164px" width="21" height="21"><path d="M1 5 H5" stroke="#501090"/><path d="M4 5 L8 1 H19 V9 H8 Z" fill="#8a30d8"/><text x="9" y="8.5" font-size="8" font-weight="bold" font-family="Liberation Sans" fill="#fff">01</text><path d="M1 16 H5" stroke="#501090"/><path d="M4 16 L8 12 H19 V20 H8 Z" fill="#8a30d8"/><path d="M9 15 H17 M9 17 H17" stroke="#fff"/></svg>
<svg style="left:682px;top:167px" width="9" height="14"><path d="M4 1 V9 M0.5 6 L4 10 L7.5 6 M0 13 H8" stroke="#111" stroke-width="2.2" fill="none"/></svg>
<svg style="left:701.6px;top:164px" width="20" height="21"><path d="M10 1 C5 1 3 3 3 6 C3 9 6 10 9 10 L7 13 L12 10 C15 10 17 8 17 6 C17 3 15 1 10 1 Z" fill="#d8d8d8" stroke="#404040" stroke-width="1.3"/><circle cx="7" cy="5.5" r="1" fill="#111"/><circle cx="10" cy="5.5" r="1" fill="#111"/><circle cx="13" cy="5.5" r="1" fill="#111"/><path d="M1 16 H5" stroke="#222"/><path d="M4 16 L8 12 H19 V20 H8 Z" fill="#3a3a3a"/></svg>
<svg style="left:725.8px;top:167px" width="9" height="14"><path d="M4 1 V9 M0.5 6 L4 10 L7.5 6 M0 13 H8" stroke="#111" stroke-width="2.2" fill="none"/></svg>
<svg style="left:744.5px;top:164px" width="20" height="21"><g transform="translate(0,-10.5)"><rect x="1.1" y="11" width="3" height="8.8" fill="#2a3ae8"/><path d="M9.5 11.2 L4 15.4 L9.5 19.6 M12 11.2 L17.5 15.4 L12 19.6" stroke="#2a3ae8" stroke-width="2.8" fill="none"/><rect x="17.1" y="11" width="3" height="8.8" fill="#2a3ae8"/></g><path d="M1 16 H5" stroke="#501090"/><path d="M4 16 L8 12 H19 V20 H8 Z" fill="#8a30d8"/><path d="M9 15 H17 M9 17 H17" stroke="#fff"/></svg>
<svg style="left:769.5px;top:167px" width="9" height="14"><path d="M4 1 V9 M0.5 6 L4 10 L7.5 6 M0 13 H8" stroke="#111" stroke-width="2.2" fill="none"/></svg>
<svg style="left:790px;top:165px" width="20" height="20"><rect x="0.5" y="0.5" width="18" height="18" fill="#e8ecf8" stroke="#8090c0"/><circle cx="4" cy="6" r="1.2" fill="#111"/><path d="M6.5 7 H16 M3 13 H16" stroke="#1a1a50" stroke-width="1.6"/><path d="M3 11 V15" stroke="#1a1a50"/></svg>
<svg style="left:820px;top:164px" width="22" height="21"><rect x="1" y="1" width="4" height="4" fill="#fff" stroke="#4050c0"/><rect x="1" y="8" width="4" height="4" fill="#fff" stroke="#4050c0"/><rect x="1" y="15" width="4" height="4" fill="#fff" stroke="#4050c0"/><path d="M14 1 L16.5 6 L21 6.5 L17.5 10 L18.5 15 L14 12.5 L9.5 15 L10.5 10 L7 6.5 L11.5 6 Z" fill="#f0c820" stroke="#b08010" stroke-width="0.8"/><path d="M15 14 V17 H9 M11 15 L9 17 L11 19" stroke="#101050" stroke-width="1.4" fill="none"/></svg>
<svg style="left:855.5px;top:164px" width="22" height="21"><path d="M8 19 Q1 14 5 7 Q7 4 11 4" stroke="#101050" stroke-width="2.6" fill="none"/><path d="M9 0 L14 4.5 L9 9 Z" fill="#101050"/><g transform="translate(16,5)"><circle cx="0" cy="0" r="5" fill="#e02030" stroke="#fff" stroke-width="0.8"/><path d="M-2.2 -2.2 L2.2 2.2 M2.2 -2.2 L-2.2 2.2" stroke="#fff" stroke-width="1.6"/></g></svg>
<svg style="left:885px;top:164px" width="22" height="22"><path d="M8 3 Q2 7 4 14 Q6 18 10 18" stroke="#101050" stroke-width="2.6" fill="none"/><path d="M8 14 L13 18 L8 22 Z" fill="#101050"/><g transform="translate(16,15)"><circle cx="0" cy="0" r="5" fill="#e02030" stroke="#fff" stroke-width="0.8"/><path d="M-2.2 -2.2 L2.2 2.2 M2.2 -2.2 L-2.2 2.2" stroke="#fff" stroke-width="1.6"/></g></svg>
<svg style="left:915.6px;top:164px" width="20" height="21"><path d="M7 20 Q0 15 3 9 Q5 6 8 6" stroke="#8a8a8a" stroke-width="2.4" fill="none"/><path d="M7 3 L11 6 L7 9 Z" fill="#8a8a8a"/><rect x="9" y="1" width="9" height="15" fill="#b8b8b8"/><rect x="10" y="10" width="8" height="5" fill="#fff" stroke="#707070" stroke-width="0.8"/></svg>
<svg style="left:946px;top:164px" width="20" height="21"><path d="M4 3 Q0 9 4 16 L8 16" stroke="#8a8a8a" stroke-width="2.4" fill="none"/><rect x="9" y="1" width="9" height="15" fill="#b8b8b8"/><rect x="10" y="10" width="8" height="5" fill="#fff" stroke="#707070" stroke-width="0.8"/></svg>
<svg style="left:975.6px;top:163px" width="20" height="22"><rect x="2" y="1" width="13" height="10" fill="#30405a"/><path d="M7 3 L12 6 L7 9 Z" fill="#fff"/><path d="M0 4 H2 M0 8 H2 M15 6 H19" stroke="#30405a" stroke-width="1.5"/><path d="M3 13 L8 19 L18 9" stroke="#20a040" stroke-width="3" fill="none"/></svg>
<svg style="left:1012px;top:164px" width="21" height="21"><path d="M6 2 Q0 7 3 14 Q5 17 8 17" stroke="#101050" stroke-width="2.6" fill="none"/><path d="M6 13 L11 17 L6 21 Z" fill="#101050"/><path d="M10 7 H19 M10 10.5 H19 M10 14 H19" stroke="#3a60e0" stroke-width="2"/></svg>
<svg style="left:1044.5px;top:164px" width="18" height="21"><path d="M2 1 V10" stroke="#404040" stroke-width="2.4"/><path d="M8 11 H16 M8 14.5 H16 M8 18 H16" stroke="#8a8a8a" stroke-width="2.2"/></svg>
<svg style="left:1072.6px;top:164px" width="20" height="21"><path d="M3 1 L8 9 M8 1 L3 9" stroke="#404040" stroke-width="1.6"/><path d="M5 5 L10 11" stroke="#707070" stroke-width="1.5"/><path d="M10 12 H19 M10 15.5 H19 M10 19 H19" stroke="#8a8a8a" stroke-width="2.2"/></svg>
<svg style="left:1109px;top:164px" width="18" height="21"><path d="M6 2 Q0 7 3 14 Q5 17 8 17" stroke="#101050" stroke-width="2.6" fill="none"/><path d="M6 13 L11 17 L6 21 Z" fill="#101050"/><path d="M11 4 H17 V20 L14 17 L11 20 Z" fill="#2a50e0"/></svg>
<svg style="left:1138.7px;top:164px" width="18" height="21"><path d="M5 20 Q0 15 3 8 Q5 5 8 5" stroke="#101050" stroke-width="2.6" fill="none"/><path d="M6 1 L11 5 L6 9 Z" fill="#101050"/><path d="M11 1 H17 V17 L14 14 L11 17 Z" fill="#2a50e0"/></svg>
<svg style="left:1174px;top:164px" width="20" height="21"><circle cx="13" cy="6" r="4.5" fill="none" stroke="#8a8a8a" stroke-width="1.8"/><path d="M16 9 L19 13" stroke="#8a8a8a" stroke-width="2.2"/><path d="M7 10 A6 6 0 1 0 7 22 Z" fill="#8a8a8a"/><path d="M7 10 A6 6 0 0 1 7 22 Z" fill="#c8c8c8"/></svg>
<svg style="left:1205px;top:164px" width="21" height="21"><circle cx="4.5" cy="4.5" r="3.5" fill="none" stroke="#7a7a7a" stroke-width="1.6"/><circle cx="13" cy="4.5" r="3.5" fill="none" stroke="#7a7a7a" stroke-width="1.6"/><path d="M8 4.5 H9.5 M16.5 4.5 H20 V8" stroke="#7a7a7a" stroke-width="1.4" fill="none"/><path d="M9 11 L17 15 L9 19 Z" fill="#c8c8d8"/></svg>
<svg style="left:1240px;top:164px" width="22" height="22"><ellipse cx="7" cy="3.5" rx="6" ry="2.5" fill="#d0d0d0"/><rect x="1" y="3.5" width="12" height="13" fill="#b8b8b8"/><ellipse cx="7" cy="16.5" rx="6" ry="2.5" fill="#a0a0a0"/><rect x="13" y="13" width="7" height="7" fill="#8a8a8a"/><path d="M14.5 13 V11 Q16.5 8.5 18.5 11 V13" stroke="#8a8a8a" stroke-width="1.4" fill="none"/></svg>
<svg style="left:1850px;top:164px" width="21" height="21"><rect x="0.5" y="1.5" width="17" height="15" fill="#f0f4ff" stroke="#8090d0"/><rect x="0.5" y="1.5" width="17" height="3" fill="#c0c8f0"/><path d="M2 9 H14" stroke="#8090d0"/><circle cx="15.5" cy="11" r="2.5" fill="#203060"/><path d="M11 20 Q15.5 13 20 20 Z" fill="#3060c0"/></svg>
<div class="t" style="left:399.4px;top:197.00px;font-size:16.6px;color:#151515;font-weight:bold;">Main</div>
<div class="a" style="left:367px;top:217px;width:1521px;height:2px;background:#bcbcbc;"></div>
<div class="a" style="left:367px;top:218.5px;width:1521px;height:22.5px;background:linear-gradient(#f2f2f2,#e6e6e6 45%,#d8d8d8 60%,#e6e6e6);"></div>
<div class="a" style="left:422px;top:218.5px;width:237.5px;height:22.5px;background:linear-gradient(#f2f4f8,#e4e8f0 45%,#d6dce6 60%,#e2e6ee);"></div>
<div class="a" style="left:367px;top:241px;width:1521px;height:1px;background:#a8a8a8;"></div>
<div class="a" style="left:398px;top:218.5px;width:1px;height:31px;background:#c0c0c0;"></div>
<div class="a" style="left:421.8px;top:218.5px;width:1px;height:31px;background:#c0c0c0;"></div>
<div class="a" style="left:659.5px;top:218.5px;width:1px;height:31px;background:#c0c0c0;"></div>
<div class="a" style="left:809px;top:218.5px;width:1px;height:31px;background:#c0c0c0;"></div>
<div class="a" style="left:934.3px;top:218.5px;width:1px;height:31px;background:#c0c0c0;"></div>
<div class="a" style="left:1309.4px;top:218.5px;width:1px;height:31px;background:#c0c0c0;"></div>
<div class="a" style="left:1866.5px;top:218.5px;width:1px;height:31px;background:#c0c0c0;"></div>
<div class="t" style="left:426.6px;top:223.00px;font-size:14px;color:#222;letter-spacing:0.2px;">Name</div>
<div class="t" style="left:664.3px;top:223.00px;font-size:14px;color:#222;letter-spacing:0.2px;">Data type</div>
<div class="t" style="left:814px;top:223.00px;font-size:14px;color:#222;letter-spacing:0.3px;">Default value</div>
<div class="t" style="left:939px;top:223.00px;font-size:14px;color:#222;letter-spacing:0.3px;">Comment</div>
<div class="a" style="left:367px;top:242px;width:1521px;height:7px;background:#ececec;"></div>
<div class="a" style="left:367px;top:242px;width:31px;height:7px;background:#c4ced8;"></div>
<div class="a" style="left:367px;top:249px;width:1521px;height:1.2px;background:#9a9a9a;"></div>
<div class="a" style="left:367px;top:250px;width:1499px;height:7.5px;background:#dcdcdc;"></div>
<div class="a" style="left:367px;top:256.5px;width:1521px;height:1.2px;background:#f6f6f6;"></div>
<div class="a" style="left:367px;top:257.7px;width:1521px;height:1.2px;background:#a0a0a0;"></div>
<div class="a" style="left:1091px;top:250px;width:29px;height:7.5px;background:#cfcfcf;border-left:1px solid #a0a0a0;border-right:1px solid #a0a0a0"></div>
<div class="a" style="left:1134.5px;top:250px;width:29px;height:7.5px;background:#cfcfcf;border-left:1px solid #a0a0a0;border-right:1px solid #a0a0a0"></div>
<svg style="left:1101px;top:251px" width="10" height="6"><path d="M1 5 L5 1 L9 5 Z" fill="#111"/></svg>
<svg style="left:1144px;top:251px" width="10" height="6"><path d="M1 1 L5 5 L9 1 Z" fill="#111"/></svg>
<svg style="left:1863px;top:246px" width="18" height="10"><path d="M3 2 H13 M3 8 H13 M5 4 L8 6.5 L11 4" stroke="#8a8a8a" stroke-width="1" fill="none"/></svg>
<div class="a" style="left:369.8px;top:261.4px;width:40.19999999999999px;height:39.4px;background:#ffffff;"></div>
<div class="a" style="left:412.6px;top:261.4px;width:39.599999999999966px;height:39.4px;background:#ffffff;"></div>
<div class="a" style="left:455px;top:261.4px;width:39.39999999999998px;height:39.4px;background:#ffffff;"></div>
<div class="a" style="left:497.8px;top:261.4px;width:39.400000000000034px;height:39.4px;background:#ffffff;"></div>
<div class="a" style="left:540px;top:261.4px;width:39.299999999999955px;height:39.4px;background:#ffffff;"></div>
<div class="a" style="left:582.7px;top:261.4px;width:39.299999999999955px;height:39.4px;background:#ffffff;"></div>
<svg style="left:375px;top:272px" width="30" height="16"><path d="M1 8.8 H12 M11.1 4 V14.6 M18.8 4 V14.6 M18 8.8 H29" stroke="#101038" stroke-width="2.8" fill="none"/></svg>
<svg style="left:417px;top:272px" width="32" height="16"><path d="M1 8.8 H12 M11.1 4 V14.6 M22.5 4 V14.6 M21.5 8.8 H32" stroke="#101038" stroke-width="2.8" fill="none"/><path d="M15.6 13 L17.8 4" stroke="#9a9a9a" stroke-width="1.4"/></svg>
<svg style="left:457px;top:272px" width="36" height="16"><path d="M0.5 9.2 H13 M23 9.2 H35.5" stroke="#101038" stroke-width="2.8"/><path d="M16 4 Q12.5 9.2 16 14.5 M20 4 Q23.5 9.2 20 14.5" stroke="#101038" stroke-width="2.6" fill="none"/></svg>
<svg style="left:505px;top:269px" width="24" height="22"><rect x="3.5" y="3.5" width="16" height="16" fill="none" stroke="#101038" stroke-width="1.5"/><path d="M0 6 H3.5 M19.5 6 H23" stroke="#101038" stroke-width="1.5"/><text x="5.5" y="15" font-size="10" font-family="Liberation Sans" fill="#101038">??</text></svg>
<svg style="left:548px;top:272px" width="22" height="14"><path d="M2 2 V9 H16" stroke="#101038" stroke-width="2.6" fill="none"/><path d="M14 4 L20 9 L14 14 Z" fill="#101038"/></svg>
<svg style="left:590px;top:267px" width="24" height="18"><path d="M1 14 H14 V6" stroke="#101038" stroke-width="2.6" fill="none"/><path d="M9 8 L14 1 L19 8 Z" fill="#101038"/></svg>
<div class="a" style="left:404px;top:306px;width:3.7px;height:35px;background:#000000;"></div>
<div class="a" style="left:367px;top:359px;width:1499px;height:25.7px;background:#d9d9d9;"></div>
<div class="a" style="left:374px;top:367.5px;width:0;height:0;border-left:6.5px solid transparent;border-right:6.5px solid transparent;border-top:7px solid #000"></div>
<div class="t" style="left:416.8px;top:363.00px;font-size:17.4px;color:#151515;font-weight:bold;transform:scaleX(0.9892515500528439);transform-origin:0 0;">Network 8:</div>
<div class="t" style="left:520.25px;top:364.00px;font-size:15.5px;color:#222;transform:scaleX(0.8009395455341038);transform-origin:0 0;">RESET COUNTER</div>
<div class="a" style="left:410px;top:391.5px;width:978px;height:1px;background:#e6e6e6;"></div>
<div class="a" style="left:410px;top:391.5px;width:1px;height:25px;background:#e6e6e6;"></div>
<div class="t" style="left:414.3px;top:395.00px;font-size:13.6px;color:#9a9a9a;transform:scaleX(1.1365431488818516);transform-origin:0 0;">Comment</div>
<div class="a" style="left:392px;top:419px;width:995px;height:1.2px;background:#c8c8f0;"></div>
<div class="a" style="left:404px;top:433.6px;width:3.7px;height:464.6px;background:#000000;"></div>
<div class="t" style="left:479.3px;top:446.00px;font-size:18.5px;color:#1a9fa8;font-weight:bold;transform:scaleX(0.9512430153412709);transform-origin:0 0;">%I0.7</div>
<div class="t" style="left:424.4px;top:472.00px;font-size:19.6px;color:#1a1a1a;transform:scaleX(0.8231886633824868);transform-origin:0 0;">"RESET_COUNTER"</div>
<div class="a" style="left:407px;top:515px;width:82px;height:3.8px;background:#000000;"></div>
<div class="a" style="left:489px;top:503.8px;width:3.4px;height:26.2px;background:#000000;"></div>
<div class="a" style="left:513.7px;top:503.8px;width:3.6px;height:26.2px;background:#000000;"></div>
<div class="a" style="left:517px;top:515px;width:307px;height:3.8px;background:#000000;"></div>
<div class="a" style="left:600px;top:515px;width:2.6px;height:202.5px;background:#000000;"></div>
<div class="a" style="left:600px;top:714px;width:224px;height:3.6px;background:#000000;"></div>
<div class="a" style="left:824px;top:470.3px;width:143.2px;height:161.7px;background:#dfdfe7;"></div>
<div class="a" style="left:824px;top:470.3px;width:141px;height:25.9px;background:#c9cbd8;"></div>
<div class="t" style="left:865.7px;top:475.00px;font-size:19.5px;color:#151515;font-weight:bold;transform:scaleX(0.9403409960513025);transform-origin:0 0;">MOVE</div>
<div class="t" style="left:829.5px;top:508.00px;font-size:18.7px;color:#151515;transform:scaleX(0.8468576948268906);transform-origin:0 0;">EN</div>
<div class="a" style="left:868.8px;top:516px;width:37px;height:1.2px;background:#8c8c8c;"></div>
<div class="t" style="left:921.8px;top:508.00px;font-size:18.7px;color:#a8a8b0;transform:scaleX(0.8735675262376794);transform-origin:0 0;">ENO</div>
<div class="a" style="left:830px;top:532.3px;width:130px;height:2.2px;background:linear-gradient(90deg,#f8f8fa,#f4f4f6 20%,#dfdfe7 32%,#dfdfe7 60%,#f8f8fa 68%,#f8f8fa);"></div>
<div class="t" style="left:829.5px;top:542.00px;font-size:18.7px;color:#151515;transform:scaleX(0.823529411764706);transform-origin:0 0;">IN</div>
<div class="t" style="left:779.8px;top:539.00px;font-size:17.8px;color:#6074e8;transform:scaleX(1.0303176654971424);transform-origin:0 0;">0</div>
<div class="a" style="left:797.5px;top:547.3px;width:26.5px;height:3.7px;background:#f8a400;"></div>
<div class="t" style="left:910.3px;top:608.00px;font-size:18.7px;color:#151515;transform:scaleX(0.8822323234759955);transform-origin:0 0;">OUT1</div>
<svg style="left:880.5px;top:607.3px" width="17" height="17"><g stroke="#1a5a90" stroke-width="2.2" stroke-linecap="round"><path d="M9.5 2 V15.5 M1.5 9.5 H15.5 M3.5 3.5 L14.5 14.5 M14.5 3.5 L3.5 14.5"/></g><g stroke="#f4f410" stroke-width="2.2" stroke-linecap="round"><path d="M8 1.5 V15 M1.5 8 H15 M2.8 2.8 L13.5 13.5 M13.5 2.8 L2.8 13.5"/></g><circle cx="8" cy="8" r="3" fill="#ffff00"/></svg>
<div class="a" style="left:967.2px;top:614.8px;width:26.6px;height:2.8px;background:#f8a400;"></div>
<div class="a" style="left:967.2px;top:515px;width:407.79999999999995px;height:3.6px;background:#000000;"></div>
<div class="a" style="left:1371px;top:511px;width:4px;height:10px;background:#000000;"></div>
<div class="t" style="left:998.3px;top:552.00px;font-size:18.7px;color:#1a9fa8;font-weight:bold;transform:scaleX(0.9127887407508829);transform-origin:0 0;">%MW1</div>
<div class="t" style="left:998px;top:578.00px;font-size:18.2px;color:#1a1a1a;transform:scaleX(0.9101795845311696);transform-origin:0 0;">"COUNTER_</div>
<div class="t" style="left:998.6px;top:602.00px;font-size:18.2px;color:#1a1a1a;transform:scaleX(0.9134555914850314);transform-origin:0 0;">BOTTLE_BAD"</div>
<div class="a" style="left:824px;top:670.3px;width:143.2px;height:161.7px;background:#dfdfe7;"></div>
<div class="a" style="left:824px;top:670.3px;width:141px;height:25.9px;background:#c9cbd8;"></div>
<div class="t" style="left:865.7px;top:675.00px;font-size:19.5px;color:#151515;font-weight:bold;transform:scaleX(0.9403409960513025);transform-origin:0 0;">MOVE</div>
<div class="t" style="left:829.5px;top:708.00px;font-size:18.7px;color:#151515;transform:scaleX(0.8468576948268906);transform-origin:0 0;">EN</div>
<div class="a" style="left:868.8px;top:716px;width:37px;height:1.2px;background:#8c8c8c;"></div>
<div class="t" style="left:921.8px;top:708.00px;font-size:18.7px;color:#a8a8b0;transform:scaleX(0.8735675262376794);transform-origin:0 0;">ENO</div>
<div class="a" style="left:830px;top:732.3px;width:130px;height:2.2px;background:linear-gradient(90deg,#f8f8fa,#f4f4f6 20%,#dfdfe7 32%,#dfdfe7 60%,#f8f8fa 68%,#f8f8fa);"></div>
<div class="t" style="left:829.5px;top:742.00px;font-size:18.7px;color:#151515;transform:scaleX(0.823529411764706);transform-origin:0 0;">IN</div>
<div class="t" style="left:779.8px;top:739.00px;font-size:17.8px;color:#6074e8;transform:scaleX(1.0303176654971424);transform-origin:0 0;">0</div>
<div class="a" style="left:797.5px;top:747.3px;width:26.5px;height:3.7px;background:#f8a400;"></div>
<div class="t" style="left:910.3px;top:808.00px;font-size:18.7px;color:#151515;transform:scaleX(0.8822323234759955);transform-origin:0 0;">OUT1</div>
<svg style="left:880.5px;top:807.3px" width="17" height="17"><g stroke="#1a5a90" stroke-width="2.2" stroke-linecap="round"><path d="M9.5 2 V15.5 M1.5 9.5 H15.5 M3.5 3.5 L14.5 14.5 M14.5 3.5 L3.5 14.5"/></g><g stroke="#f4f410" stroke-width="2.2" stroke-linecap="round"><path d="M8 1.5 V15 M1.5 8 H15 M2.8 2.8 L13.5 13.5 M13.5 2.8 L2.8 13.5"/></g><circle cx="8" cy="8" r="3" fill="#ffff00"/></svg>
<div class="a" style="left:967.2px;top:814.8px;width:26.6px;height:2.8px;background:#f8a400;"></div>
<div class="a" style="left:967.2px;top:714px;width:80.5px;height:3.6px;background:#000000;"></div>
<div class="a" style="left:1043.7px;top:710px;width:4px;height:10px;background:#000000;"></div>
<div class="t" style="left:998.3px;top:752.00px;font-size:18.7px;color:#1a9fa8;font-weight:bold;transform:scaleX(0.9625772175191128);transform-origin:0 0;">%MW0</div>
<div class="t" style="left:998px;top:778.00px;font-size:18.2px;color:#1a1a1a;transform:scaleX(0.9101795845311696);transform-origin:0 0;">"COUNTER_</div>
<div class="t" style="left:998.6px;top:802.00px;font-size:18.2px;color:#1a1a1a;transform:scaleX(0.9511192041719866);transform-origin:0 0;">BOTTLE_GOOD"</div>
<div class="a" style="left:367px;top:916px;width:1499px;height:10px;background:#d8d8d8;"></div>
<div class="a" style="left:374px;top:924px;width:13px;height:2px;background:#111;"></div>
<div class="a" style="left:367px;top:916px;width:1499px;height:10px;overflow:hidden"><div class="t" style="left:49.8px;top:5px;font-size:17.4px;font-weight:bold;color:#151515">Network 9:</div></div>
<div class="a" style="left:1867px;top:307px;width:21px;height:21px;background:linear-gradient(#f6f6f6,#dedede);border:1px solid #a8a8a8"></div>
<svg style="left:1870px;top:311px" width="16" height="12"><path d="M2 9 L7.5 3.5 L13 9" stroke="#4a4a4a" stroke-width="2" fill="none"/></svg>
<div class="a" style="left:1867px;top:782.7px;width:21px;height:87.5px;background:linear-gradient(90deg,#f6f6f6,#d8d8d8);border:1px solid #a8a8a8"></div>
<div class="a" style="left:1872px;top:823px;width:11px;height:1.2px;background:#555;"></div>
<div class="a" style="left:1872px;top:826px;width:11px;height:1.2px;background:#555;"></div>
<div class="a" style="left:1872px;top:829px;width:11px;height:1.2px;background:#555;"></div>
<div class="a" style="left:1543.8px;top:926.4px;width:174.5px;height:22px;background:#ffffff;border:1px solid #a8a8a8;border-right:none"></div>
<div class="t" style="left:1548px;top:931.00px;font-size:14px;color:#222;transform:scaleX(1.0333120969079184);transform-origin:0 0;">140%</div>
<div class="a" style="left:1718px;top:926.4px;width:20px;height:22px;background:linear-gradient(#f8f8f8,#d4d4d4);border:1px solid #a0a0a0;border-radius:0 2px 0 0"></div>
<div class="a" style="left:1723.6px;top:935px;width:0;height:0;border-left:4.5px solid transparent;border-right:4.5px solid transparent;border-top:5px solid #000"></div>
<div class="a" style="left:1761px;top:936.2px;width:50px;height:1.6px;background:#8a8a8a;"></div>
<div class="a" style="left:1761.5px;top:943.8px;width:1.6px;height:3.6px;background:#111;"></div>
<div class="a" style="left:1767.9px;top:943.8px;width:1.6px;height:3.6px;background:#111;"></div>
<div class="a" style="left:1772.9px;top:943.8px;width:1.6px;height:3.6px;background:#111;"></div>
<div class="a" style="left:1779.3px;top:943.8px;width:1.6px;height:3.6px;background:#111;"></div>
<div class="a" style="left:1785.5px;top:943.8px;width:1.6px;height:3.6px;background:#111;"></div>
<div class="a" style="left:1790.5px;top:943.8px;width:1.6px;height:3.6px;background:#111;"></div>
<div class="a" style="left:1796.8px;top:943.8px;width:1.6px;height:3.6px;background:#111;"></div>
<div class="a" style="left:1802.8px;top:943.8px;width:1.6px;height:3.6px;background:#111;"></div>
<div class="a" style="left:1409px;top:956.2px;width:140px;height:28px;background:linear-gradient(#f4f4f4,#e6e6e6);border:1px solid #8a8a8a;border-bottom:none;border-radius:2px 2px 0 0"></div>
<div class="a" style="left:1550px;top:956.2px;width:94px;height:28px;background:linear-gradient(#e4e4e4,#d4d4d4);border:1px solid #8a8a8a;border-bottom:none;border-radius:2px 2px 0 0"></div>
<div class="a" style="left:1646px;top:956.2px;width:151px;height:28px;background:linear-gradient(#e4e4e4,#d4d4d4);border:1px solid #8a8a8a;border-bottom:none;border-radius:2px 2px 0 0"></div>
<svg style="left:1412px;top:959px" width="22" height="22"><rect x="1.5" y="1.5" width="17" height="18" fill="#eef0ff" stroke="#8090d0"/><path d="M3 6 H6 M3 9 H6 M3 12 H6 M3 15 H6" stroke="#8a8a8a"/><circle cx="11" cy="10" r="4.5" fill="#dde" stroke="#202040" stroke-width="1.8"/><path d="M14 13.5 L19 18.5" stroke="#d09020" stroke-width="3"/></svg>
<div class="t" style="left:1436.8px;top:962.00px;font-size:17.6px;color:#151515;font-weight:bold;transform:scaleX(0.9097513977951164);transform-origin:0 0;">Properties</div>
<svg style="left:1553px;top:959px" width="22" height="22"><rect x="3.5" y="3.5" width="14" height="15" fill="#eef0ff" stroke="#8090d0"/><path d="M1 4 H6 M4 1.5 L6.5 4 L4 6.5" stroke="#101050" stroke-width="1.6" fill="none"/><text x="8" y="15" font-size="12" font-weight="bold" font-family="Liberation Serif" fill="#101050">i</text><path d="M13 17 L18 20 M16 17.5 L18.5 20 L16 22" stroke="#101050" stroke-width="1.6" fill="none"/></svg>
<div class="t" style="left:1578px;top:962.00px;font-size:17.6px;color:#6a6a6a;transform:scaleX(1.0900574835001064);transform-origin:0 0;">Info</div>
<svg style="left:1622px;top:961px" width="17" height="17"><path d="M5 1 H12 L16 5 V12 L12 16 H5 L1 12 V5 Z" fill="#f0d010" stroke="#907000" stroke-width="0.8"/><rect x="7.3" y="7" width="2.4" height="6.5" fill="#111"/><rect x="7.3" y="3.5" width="2.4" height="2.2" fill="#111"/></svg>
<svg style="left:1651px;top:959px" width="18" height="22"><rect x="0.5" y="0.5" width="16" height="19" fill="#f4f6ff" stroke="#8090d0"/><path d="M4 3 V9 Q7 13 10 9 V3 M7 11 V15 Q9 17 11 15" stroke="#101040" stroke-width="1.4" fill="none"/><circle cx="12" cy="14" r="1.6" fill="#101040"/></svg>
<div class="t" style="left:1674px;top:962.00px;font-size:17.6px;color:#6a6a6a;transform:scaleX(1.022253244005254);transform-origin:0 0;">Diagnostics</div>
<svg style="left:44px;top:994px" width="10" height="17"><path d="M9 0.5 V16 L0.5 8.2 Z" fill="#f4f4f4"/></svg>
<div class="t" style="left:66.5px;top:995.00px;font-size:17.5px;color:#f4f4f4;font-weight:bold;transform:scaleX(0.9913713287984542);transform-origin:0 0;">Portal view</div>
<div class="a" style="left:226px;top:989px;width:141.5px;height:24.6px;background:#c8c8c8;"></div>
<div class="a" style="left:371px;top:989px;width:141.6px;height:24.6px;background:#ffffff;"></div>
<div class="a" style="left:516.6px;top:989px;width:141px;height:24.6px;background:#c8c8c8;"></div>
<svg style="left:229px;top:991px" width="20" height="20"><rect x="0.5" y="0.5" width="18" height="18" fill="#f4f4ff" stroke="#2a3a8a"/><rect x="0.5" y="0.5" width="18" height="3" fill="#2a3a8a"/><path d="M3 5 V17" stroke="#2a3a8a"/><g fill="#f09000"><rect x="6" y="7" width="4" height="3"/><rect x="12" y="7" width="4" height="3"/><rect x="6" y="12" width="4" height="3"/><rect x="12" y="12" width="4" height="3"/></g></svg>
<div class="t" style="left:255px;top:994.00px;font-size:14.5px;color:#333;transform:scaleX(1.009434358647839);transform-origin:0 0;">Overview</div>
<svg style="left:375px;top:994px" width="22" height="15"><rect x="4" y="1.5" width="12" height="11" fill="#a020e0" stroke="#6010a0"/><path d="M0 7 H20" stroke="#7010b0" stroke-width="2.5"/><path d="M1 3.5 H4 M1 10.5 H4" stroke="#7010b0" stroke-width="2"/><rect x="8" y="4.5" width="5" height="5" fill="#e090ff"/></svg>
<div class="t" style="left:400px;top:994.00px;font-size:15px;color:#111;transform:scaleX(1.0118989405052974);transform-origin:0 0;">Main (OB1)</div>
<svg style="left:519px;top:991px" width="24" height="21"><rect x="0.5" y="0.5" width="11" height="11" fill="#eef0ff" stroke="#6070c0"/><path d="M2 3 H9 M2 5.5 H9" stroke="#6070c0"/><path d="M3 12 L7 8 H20 V17 H7 Z" fill="#9040e0" stroke="#501090" stroke-width="0.8"/><path d="M6 16 L10 12 H22 V20 H10 Z" fill="#8030d0" stroke="#501090" stroke-width="0.8"/></svg>
<div class="t" style="left:545px;top:994.00px;font-size:15px;color:#333;transform:scaleX(0.8995080815179199);transform-origin:0 0;">PLC tags</div>
<div class="a" style="left:1497.3px;top:989px;width:25.5px;height:24.5px;background:#c8c8c8;"></div>
<svg style="left:1500px;top:991px" width="22" height="21"><path d="M2 3 H10 M2 7 H10 M2 11 H10" stroke="#fff" stroke-width="2.6"/><path d="M1 15.5 H20 V19.5 H1 Z" fill="#1a2060"/><path d="M3 17.5 H7 M9 17.5 H13 M15 17.5 H18" stroke="#fff" stroke-width="1.6"/><path d="M18 13 V7 Q18 4 14 4" stroke="#1a2060" stroke-width="1.6" fill="none"/><path d="M14 1 L11 4 L14 7 Z" fill="#1a2060"/></svg>
<div class="a" style="left:1530px;top:985px;width:1px;height:33px;background:#4a4a4a;"></div>
<svg style="left:1535px;top:993px" width="19" height="19"><circle cx="9.5" cy="9.3" r="9.3" fill="#1a20e8"/><path d="M5 9.5 L8.5 13 L14.5 6" stroke="#fff" stroke-width="2.2" fill="none"/></svg>
<div class="t" style="left:1560.2px;top:997.00px;font-size:14.5px;color:#ececec;transform:scaleX(1.0213611055288263);transform-origin:0 0;">Project Automatic Bottle Inspection Sys...</div>
<div class="a" style="left:1890px;top:130.3px;width:25.5px;height:151.2px;background:linear-gradient(90deg,#f2f2f2,#ececec 50%,#e2e2e2);border:1px solid #8a8a8a;border-left:none"></div>
<div class="a" style="left:1890px;top:285.6px;width:25.5px;height:113.0px;background:linear-gradient(90deg,#f2f2f2,#ececec 50%,#e2e2e2);border:1px solid #8a8a8a;border-left:none"></div>
<div class="a" style="left:1890px;top:403px;width:25.5px;height:97.30000000000001px;background:linear-gradient(90deg,#f2f2f2,#ececec 50%,#e2e2e2);border:1px solid #8a8a8a;border-left:none"></div>
<div class="a" style="left:1890px;top:504.6px;width:25.5px;height:122.69999999999993px;background:linear-gradient(90deg,#f2f2f2,#ececec 50%,#e2e2e2);border:1px solid #8a8a8a;border-left:none"></div>
<svg style="left:1893px;top:133px" width="20" height="21"><g fill="#f4f4f4" stroke="#9098b0" stroke-width="0.8"><rect x="0.5" y="0.5" width="8" height="8"/><rect x="10.5" y="0.5" width="8" height="8"/><rect x="0.5" y="11" width="8" height="8"/><rect x="10.5" y="11" width="8" height="8"/></g><g stroke="#202050" stroke-width="1.2"><path d="M2.5 4.5 H6.5 M12.5 3 H16.5 M12.5 6 H16.5 M2.5 17 H6.5 M12.5 15 H16.5"/></g></svg>
<div class="t" style="left:1913.22px;top:157.8px;font-size:17px;color:#111;transform:rotate(90deg) scaleX(0.9682610553094716);transform-origin:0 0;font-weight:bold;">Instructions</div>
<svg style="left:1894px;top:288px" width="18" height="21"><rect x="0.5" y="0.5" width="15" height="18" fill="#f4f6ff" stroke="#8090d0"/><path d="M4 3 V8 Q6.5 12 9 8 V3 M6.5 10 V14 Q8 16 10 14" stroke="#101040" stroke-width="1.4" fill="none"/><circle cx="11" cy="13" r="1.6" fill="#101040"/></svg>
<div class="t" style="left:1912.36px;top:312.2px;font-size:18.5px;color:#5a5a5a;transform:rotate(90deg) scaleX(0.9979948141054732);transform-origin:0 0;">Testing</div>
<svg style="left:1893px;top:405px" width="22" height="21"><rect x="1.5" y="2.5" width="13" height="16" fill="#f8f0d8" stroke="#c09840"/><rect x="5" y="1" width="6" height="3" fill="#d0d0d0" stroke="#808080" stroke-width="0.6"/><path d="M4 7 H12 M4 10 H12 M4 13 H10" stroke="#2030a0" stroke-width="1.4"/><path d="M8 14 L12 18 L20 8" stroke="#20a030" stroke-width="3" fill="none"/></svg>
<div class="t" style="left:1912.36px;top:430.3px;font-size:18.5px;color:#5a5a5a;transform:rotate(90deg) scaleX(0.9367893520832179);transform-origin:0 0;">Tasks</div>
<svg style="left:1893px;top:508px" width="20" height="17"><path d="M1 1 Q5 0 9.5 2 Q14 0 18 1 V14 Q14 13 9.5 15 Q5 13 1 14 Z" fill="#f0f2ff" stroke="#202080" stroke-width="1.5"/><path d="M9.5 2 V15" stroke="#202080" stroke-width="1.2"/></svg>
<div class="t" style="left:1912.28px;top:531.8px;font-size:18px;color:#5a5a5a;transform:rotate(90deg) scaleX(0.9879359905841877);transform-origin:0 0;">Libraries</div>
<div class="a" style="left:1803px;top:886px;width:108px;height:108px;border-radius:50%;background:radial-gradient(circle closest-side at 50% 50%,#ea1a40 0,#dc173b 45%,#c01434 70%,#900d26 88%,#6a0818 100%)"></div>
<div class="t" style="left:1803px;top:908px;width:108px;text-align:center;font-family:'Liberation Serif',serif;font-weight:bold;font-size:31.5px;color:#fff;line-height:1">Inst</div>
<div class="t" style="left:1803px;top:941px;width:108px;text-align:center;font-family:'Liberation Serif',serif;font-weight:bold;font-size:31.5px;color:#fff;line-height:1">Tools</div>
</body></html>
